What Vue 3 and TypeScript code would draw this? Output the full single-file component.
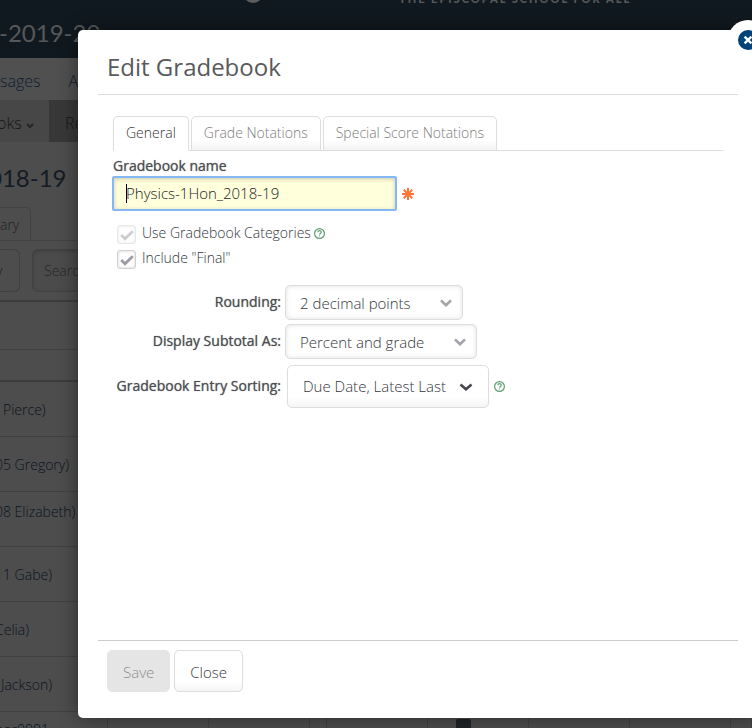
<script setup lang="ts">
import { ref } from 'vue'

const name = ref('Physics-1Hon_2018-19')
const useCategories = ref(true)
const includeFinal = ref(true)
const activeTab = ref('General')
const tabs: string[] = ['General', 'Grade Notations', 'Special Score Notations']

interface Student { name: string; upper?: boolean }
const students: Student[] = [
  { name: 'Pierce)' },
  { name: '05 Gregory)' },
  { name: '08 Elizabeth)', upper: true },
  { name: '11 Gabe)' },
  { name: 'Celia)' },
  { name: 'Jackson)' },
]
</script>

<template>
  <div class="page">
    <header class="banner">
      <span class="emblem"></span>
      <span class="motto">THE EPISCOPAL SCHOOL FOR ALL</span>
      <span class="course">-2019-20</span>
    </header>
    <nav class="nav">
      <a href="#">sages</a>
      <a href="#">A</a>
    </nav>
    <nav class="subnav">
      <a href="#">oks
        <svg width="8" height="6" viewBox="0 0 8 6"><path d="M1 1l3 3 3-3" /></svg>
      </a>
      <a href="#" class="on">Re</a>
    </nav>
    <main class="content">
      <h1>018-19</h1>
      <div class="page-tabs"><span>ary</span></div>
      <div class="tools">
        <button type="button">y</button>
        <input type="search" placeholder="Search" aria-label="Search" />
      </div>
      <table class="students">
        <colgroup>
          <col class="c-name" /><col class="c-a" /><col class="c-a" /><col class="c-gap" />
          <col class="c-a" /><col class="c-a" /><col class="c-a" /><col class="c-a" /><col />
        </colgroup>
        <thead>
          <tr class="h1"><th colspan="9"></th></tr>
          <tr class="h2"><th colspan="9"></th></tr>
        </thead>
        <tbody>
          <tr v-for="s in students" :key="s.name">
            <td :class="{ upper: s.upper }"><span>{{ s.name }}</span></td>
            <td v-for="n in 8" :key="n"></td>
          </tr>
          <tr>
            <td class="upper last"><span>nor0001</span></td>
            <td></td><td></td><td></td><td></td>
            <td class="marked"><i></i></td>
            <td></td><td></td><td></td>
          </tr>
        </tbody>
      </table>
    </main>

    <section class="dialog" role="dialog" aria-labelledby="dialog-title">
      <button class="dismiss" type="button" aria-label="Dismiss">
        <svg width="20" height="20" viewBox="0 0 20 20">
          <circle cx="10" cy="10" r="10" fill="#00427a" />
          <path d="M6.6 6.6l6.8 6.8M13.4 6.6l-6.8 6.8" stroke="#fff" stroke-width="2.4" />
        </svg>
      </button>
      <h2 id="dialog-title">Edit Gradebook</h2>
      <div class="body">
        <div class="tabs" role="tablist">
          <button
            v-for="t in tabs"
            :key="t"
            type="button"
            role="tab"
            :aria-selected="t === activeTab"
            :class="{ active: t === activeTab }"
            @click="activeTab = t"
          >{{ t }}</button>
        </div>
        <form @submit.prevent>
          <label class="name-label" for="gb-name">Gradebook name</label>
          <div class="name-row">
            <div class="name-box">
              <input id="gb-name" v-model="name" type="text" />
              <i class="caret"></i>
            </div>
            <svg class="required" width="12" height="12" viewBox="0 0 12 12">
              <path d="M6 0v12M0 6h12M1.7 1.7l8.6 8.6M10.3 1.7l-8.6 8.6" />
            </svg>
          </div>

          <div class="checks">
            <div class="check">
              <span class="tick off">
                <input id="gb-cat" v-model="useCategories" type="checkbox" disabled />
                <svg v-if="useCategories" width="14" height="11" viewBox="0 0 14 11"><path d="M1.2 5l3.8 3.8L12.8 1.2" /></svg>
              </span>
              <label for="gb-cat">Use Gradebook Categories</label>
              <svg class="help" width="11" height="11" viewBox="0 0 11 11">
                <circle cx="5.5" cy="5.5" r="4.9" />
                <path d="M3.8 4.3c0-2.1 3.4-2.1 3.4-.1 0 1.2-1.7 1.2-1.7 2.4M5.5 7.4v1.2" />
              </svg>
            </div>
            <div class="check">
              <span class="tick">
                <input id="gb-final" v-model="includeFinal" type="checkbox" />
                <svg v-if="includeFinal" width="14" height="11" viewBox="0 0 14 11"><path d="M1.2 5l3.8 3.8L12.8 1.2" /></svg>
              </span>
              <label for="gb-final">Include "Final"</label>
            </div>
          </div>

          <div class="options">
            <label for="gb-round">Rounding:</label>
            <div class="field">
              <div class="pick rounding">
                <select id="gb-round"><option>2 decimal points</option></select>
                <svg width="12" height="8" viewBox="0 0 12 8"><path d="M1 1.4l5 4.8 5-4.8" /></svg>
              </div>
            </div>
            <label for="gb-sub">Display Subtotal As:</label>
            <div class="field">
              <div class="pick subtotal">
                <select id="gb-sub"><option>Percent and grade</option></select>
                <svg width="12" height="8" viewBox="0 0 12 8"><path d="M1 1.4l5 4.8 5-4.8" /></svg>
              </div>
            </div>
            <label for="gb-sort">Gradebook Entry Sorting:</label>
            <div class="field sorting-field">
              <div class="pick sorting">
                <select id="gb-sort"><option>Due Date, Latest Last</option></select>
                <svg width="14" height="8" viewBox="0 0 14 8"><path d="M1.5 1.4L7 6.2l5.5-4.8" /></svg>
              </div>
              <svg class="help" width="11" height="11" viewBox="0 0 11 11">
                <circle cx="5.5" cy="5.5" r="4.9" />
                <path d="M3.8 4.3c0-2.1 3.4-2.1 3.4-.1 0 1.2-1.7 1.2-1.7 2.4M5.5 7.4v1.2" />
              </svg>
            </div>
          </div>
        </form>
      </div>
      <footer>
        <button type="button" class="save" disabled>Save</button>
        <button type="button" class="close">Close</button>
      </footer>
    </section>
  </div>
</template>

<style>
body { margin: 0; background: #4d4d4d; }
</style>

<style scoped>
* { box-sizing: border-box; }
.page {
  position: relative;
  height: 100vh;
  overflow: hidden;
  background: #4d4d4d;
  color: #0b131d;
  font: 300 14px/20px "Open Sans", sans-serif;
}
button, input, select { font-family: inherit; font-weight: inherit; margin: 0; }
a { color: inherit; text-decoration: none; }

.banner { position: relative; height: 58px; background: #111920; overflow: hidden; color: #575859; }
.course { display: block; margin-left: -1px; padding-top: 16px; font: 24px/34px Lato, sans-serif; }
.emblem { position: absolute; left: 243px; top: -17px; width: 20px; height: 20px; border-radius: 50%; background: #5d5d5d; }
.motto { position: absolute; left: 399px; top: -9px; font: 900 11px/16px Lato, sans-serif; letter-spacing: 2px; white-space: nowrap; }
.nav { display: flex; gap: 28px; align-items: center; height: 42px; background: #505050; color: #0f1d31; font-size: 16px; }
.nav a { padding-top: 4px; }
.subnav { display: flex; height: 42px; background: #474747; color: #151515; font-size: 16px; line-height: 46px; }
.subnav a { width: 49px; flex: none; white-space: nowrap; margin-left: -3px; }
.subnav .on { flex: 1; margin-left: 3px; padding-left: 16px; background: #383838; }
.subnav path { fill: none; stroke: #242424; stroke-width: 2; }

.content h1 { margin: 0 0 0 -12px; padding: 20px 0 13px; font: 400 24px/32px Lato, sans-serif; color: #141b24; }
.page-tabs { display: flex; border-bottom: 1px solid #424242; color: #202020; line-height: 33px; }
.page-tabs span { width: 31px; height: 34px; margin-bottom: -1px; border: 1px solid #424242; border-width: 1px 1px 0 0; border-radius: 0 5px 0 0; }
.tools { display: flex; gap: 12px; padding: 8px 0; }
.tools button { width: 20px; height: 43px; padding: 0; border: 1px solid #414141; border-left: 0; border-radius: 0 6px 6px 0; background: #4d4d4d; color: #1a1a1a; font-size: 14px; text-align: left; text-indent: -4px; }
.tools input { width: 160px; height: 43px; padding: 0 11px; border: 1px solid #414141; border-radius: 6px; background: #4b4b4b; box-shadow: inset 0 1px 3px #3d3d3d; font-size: 14px; }
.tools input::placeholder { color: #262626; opacity: 1; }
.students { width: 100%; table-layout: fixed; border-collapse: collapse; border-top: 2px solid #3c3c3c; }
.c-name { width: 107px; }
.c-a { width: 101px; }
.c-gap { width: 17px; }
.students th { padding: 0; }
.h1 { height: 48px; border-bottom: 1px solid #414141; }
.h2 { height: 32px; border-bottom: 2px solid #3c3c3c; }
.students tbody tr { height: 55px; }
.students td { padding: 2px 0 0; border-bottom: 1px solid #414141; border-right: 1px solid #414141; text-align: left; white-space: nowrap; }
.students td span { display: block; width: 80px; margin-left: -5px; }
.students tr:nth-child(1) td span { margin-left: 3px; }
.students tr:nth-child(6) td span { margin-left: 1px; }
.students td.upper { vertical-align: top; padding-top: 10px; }
.students td.last { padding-top: 8px; }
.students td.marked { vertical-align: top; padding-top: 7px; }
.marked i { display: block; width: 15px; height: 15px; margin-left: 28px; border-radius: 2px; background: #202325; }

.dialog {
  position: absolute;
  top: 30px;
  right: -6px;
  bottom: 10px;
  left: 78px;
  display: flex;
  flex-direction: column;
  padding: 0 20px;
  border-radius: 5px;
  background: #fff;
  box-shadow: 0 0 20px rgba(0, 0, 0, 0.45);
  color: #34363b;
}
.dismiss {
  position: absolute;
  top: -10px;
  right: -10px;
  display: grid;
  place-items: center;
  width: 40px;
  height: 40px;
  padding: 0;
  border: 0;
  border-radius: 50%;
  background: #fff;
}
h2 { margin: 0; padding: 20px 9px 10px; border-bottom: 1px solid #ddd; font-size: 24px; line-height: 34px; font-weight: 400; color: #58595b; }
.body { flex: 1; padding: 21px 15px 0; }
.tabs { display: flex; gap: 2px; border-bottom: 1px solid #ddd; }
.tabs button {
  height: 35px;
  margin-bottom: -1px;
  padding: 0 12px 2px;
  border: 1px solid #ddd;
  border-radius: 5px 5px 0 0;
  background: linear-gradient(#fff 70%, #f3f3f3);
  color: #7c7c7c;
  font-size: 14px;
  white-space: nowrap;
}
.tabs .active { border-bottom-color: #fff; background: #fff; color: #333; }
.name-label { display: block; padding-top: 5px; }
.name-label, .options > label { color: #4c4e52; font-weight: 500; text-shadow: 0 0 1px #77797d; }
.name-row { display: flex; align-items: center; gap: 5px; margin-left: -1px; }
.name-box { position: relative; width: 285px; }
.name-box input {
  display: block;
  width: 100%;
  height: 35px;
  padding: 0 12px 1px;
  border: 2px solid #86b7f5;
  border-radius: 2px;
  outline: 0;
  background: #ffffdc;
  box-shadow: inset 0 1px 4px rgba(0, 0, 0, 0.22);
  color: #22231f;
  font-size: 15px;
}
.caret { position: absolute; left: 14px; top: 8px; width: 1px; height: 19px; background: #000; }
.required path { fill: none; stroke: #ff7435; stroke-width: 2; }
.checks { display: grid; gap: 5px; padding: 12px 0 0 4px; }
.check { display: flex; align-items: center; height: 20px; }
.check label { padding: 0 3px 0 6px; }
.tick { position: relative; width: 19px; height: 19px; margin-top: 3px; }
.tick input { appearance: none; display: block; width: 19px; height: 19px; border: 1px solid #d2d2d2; border-radius: 3px; background: #fff; box-shadow: inset 0 0 3px #ccc; }
.tick svg { position: absolute; left: 3px; top: 5px; pointer-events: none; }
.tick path { fill: none; stroke: #9a9da2; stroke-width: 2.8; }
.tick.off { opacity: 0.5; }
.help { flex: none; fill: none; stroke: #5f9d73; stroke-width: 1.2; }

.options { display: grid; grid-template-columns: 168px 1fr; row-gap: 4px; column-gap: 4px; padding-top: 17px; }
.options > label { padding-top: 7px; text-align: right; white-space: nowrap; justify-self: end; }
.field { display: flex; align-items: center; gap: 5px; }
.sorting-field { padding: 2px 0 0 2px; }
.options > label:nth-of-type(3) { padding-top: 13px; }
.pick { position: relative; }
.pick select {
  appearance: none;
  display: block;
  width: 100%;
  height: 35px;
  padding: 1px 14px 0;
  border: 1px solid #ddd;
  border-radius: 5px;
  background: #fff;
  box-shadow: inset 0 0 5px #e2e2e2;
  color: #34363b;
  font-size: 15px;
}
.pick svg { position: absolute; right: 11px; top: 50%; margin-top: -4px; pointer-events: none; }
.pick path { fill: none; stroke: #a0a3a8; stroke-width: 2.6; }
.rounding { width: 178px; }
.subtotal { width: 192px; }
.sorting { width: 202px; }
.sorting select { height: 43px; padding: 0 15px 1px; background: linear-gradient(#fff 75%, #f6f6f6); box-shadow: none; }
.sorting svg { right: 16px; }
.sorting path { stroke: #45474c; }

footer { display: flex; gap: 4px; padding: 9px 9px 26px; border-top: 1px solid #ccc; }
footer button { height: 42px; padding: 2px 15px 0; border: 1px solid #ddd; border-radius: 5px; font-size: 15px; }
.save { border-color: #e5e5e5; background: #e5e5e5; color: #8c8c8c; }
.close { background: linear-gradient(#fff 75%, #f5f5f5); color: #34363b; }
</style>
